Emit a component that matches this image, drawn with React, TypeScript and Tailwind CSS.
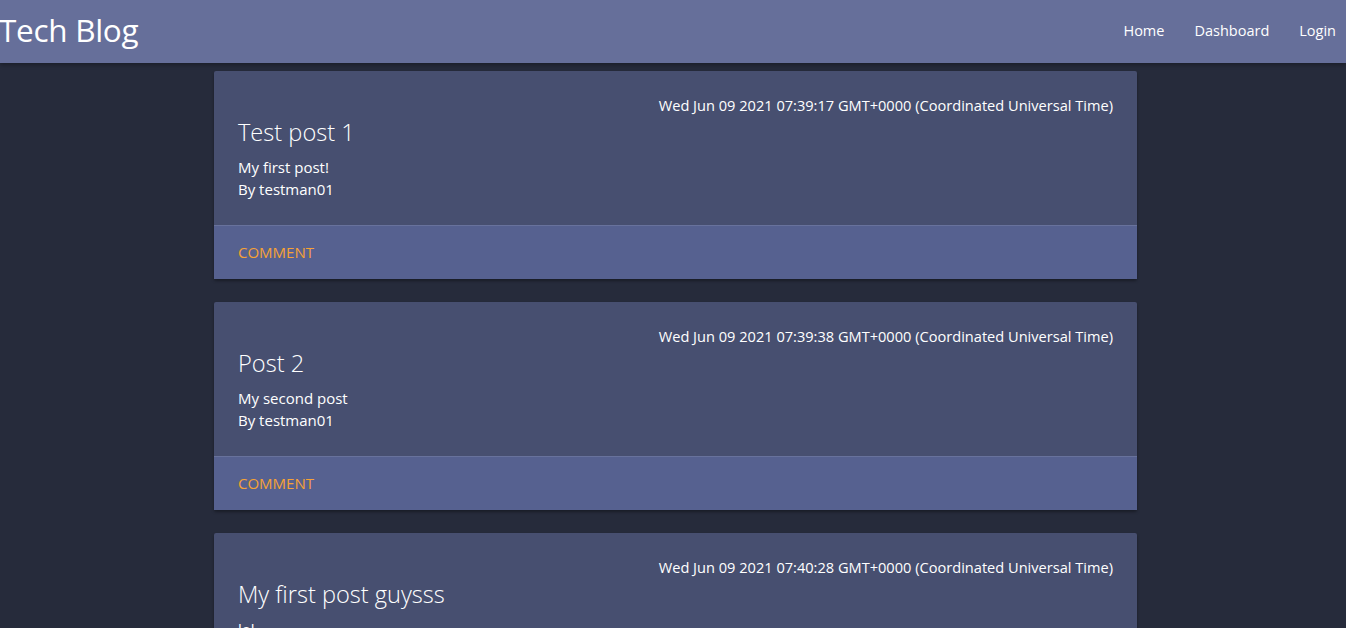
import React from "react";

const posts = [
  { title: "Test post 1", date: "Wed Jun 09 2021 07:39:17 GMT+0000 (Coordinated Universal Time)", body: "My first post!", author: "testman01" },
  { title: "Post 2", date: "Wed Jun 09 2021 07:39:38 GMT+0000 (Coordinated Universal Time)", body: "My second post", author: "testman01" },
  { title: "My first post guysss", date: "Wed Jun 09 2021 07:40:28 GMT+0000 (Coordinated Universal Time)", body: "lol", author: "testman01" },
];

export default function App() {
  return (
    <div className="min-h-[628px] bg-[#262b3b] text-white" style={{ fontFamily: '"Open Sans", "Noto Sans", sans-serif' }}>
      <nav className="h-[63px] bg-[#666f9a] flex items-center justify-between shadow-[0_2px_4px_rgba(0,0,0,0.3)] relative z-10">
        <span className="text-[31.5px] leading-[40px] pb-[4px] tracking-[-0.3px] -ml-[1px]">Tech Blog</span>
        <ul className="flex items-center gap-[30px] pr-[10px] pb-[2px] text-[14.5px]">
          <li>Home</li>
          <li>Dashboard</li>
          <li>Login</li>
        </ul>
      </nav>
      <main className="w-[923px] ml-[214px] pt-[8px] flex flex-col gap-[23px]">
        {posts.map((p) => (
          <div key={p.title} className="bg-[#474f70] rounded-[2px] shadow-[0_2px_3px_rgba(0,0,0,0.35)]">
            <div className="px-[24px] pt-[23px] pb-[25px] text-[15px] leading-[22px]">
              <div className="text-right text-[14.6px]">{p.date}</div>
              <div className="text-[23.6px] leading-[32px] font-light mb-[8px]">{p.title}</div>
              <p>{p.body}</p>
              <p>By {p.author}</p>
            </div>
            <div className="bg-[#566190] border-t border-[#68729c] px-[24px] pt-[15px] pb-[16px] text-[15px] leading-[22px] text-[#f7a235] uppercase">
              Comment
            </div>
          </div>
        ))}
      </main>
    </div>
  );
}
